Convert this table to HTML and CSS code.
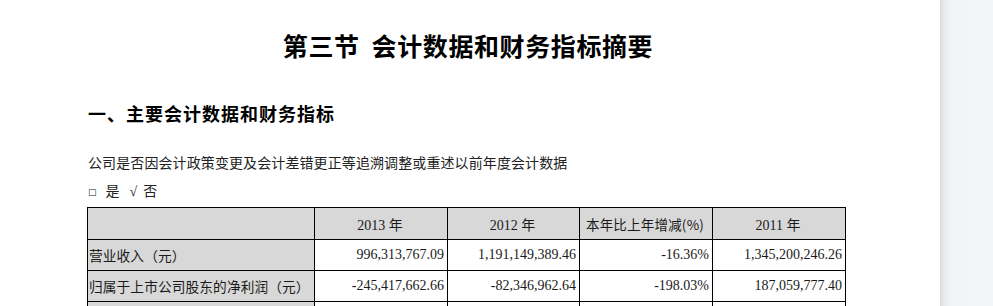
FILE: index.html
```html
<!DOCTYPE html>
<html lang="zh-CN">
<head>
<meta charset="utf-8">
<title>第三节 会计数据和财务指标摘要</title>
<link rel="stylesheet" href="styles.css">
</head>
<body>
<div class="viewer">
  <div class="page">
    <h1 class="title">第三节<span class="gap"> </span>会计数据和财务指标摘要</h1>
    <h2 class="section">一、主要会计数据和财务指标</h2>
    <p class="note">公司是否因会计政策变更及会计差错更正等追溯调整或重述以前年度会计数据</p>
    <p class="choice"><span class="box">□</span><span class="opt">是</span><span class="tick">√</span><span class="opt">否</span></p>
    <table class="data">
      <colgroup>
        <col class="c1"><col class="c2"><col class="c3"><col class="c4"><col class="c5">
      </colgroup>
      <tr class="head">
        <th></th>
        <th>2013 年</th>
        <th>2012 年</th>
        <th class="cjk">本年比上年增减(%)</th>
        <th>2011 年</th>
      </tr>
      <tr>
        <td class="label">营业收入（元）</td>
        <td class="num">996,313,767.09</td>
        <td class="num">1,191,149,389.46</td>
        <td class="num">-16.36%</td>
        <td class="num">1,345,200,246.26</td>
      </tr>
      <tr>
        <td class="label">归属于上市公司股东的净利润（元）</td>
        <td class="num">-245,417,662.66</td>
        <td class="num">-82,346,962.64</td>
        <td class="num">-198.03%</td>
        <td class="num">187,059,777.40</td>
      </tr>
      <tr class="tall">
        <td class="label"></td>
        <td class="num"></td>
        <td class="num"></td>
        <td class="num"></td>
        <td class="num"></td>
      </tr>
    </table>
  </div>
  <div class="side"></div>
</div>
</body>
</html>
```
FILE: styles.css
```css
html, body {
  margin: 0;
  padding: 0;
  height: 100%;
  overflow: hidden;
}
body {
  background: #f4f5f7;
  color: #111;
  font-family: "Liberation Serif", "Noto Sans CJK SC", serif;
}
.viewer {
  display: flex;
  height: 306px;
  overflow: hidden;
}
.page {
  width: 940px;
  flex: none;
  background: #ffffff;
  padding-left: 87px;
  box-sizing: border-box;
}
.side {
  flex: 1;
  background: linear-gradient(to right, #d9dadd 0px, #e9eaed 4px, #f3f4f6 11px, #f4f5f7 100%);
}
.title {
  margin: 31px 0 0 0;
  width: 762px;
  text-align: center;
  font-family: "Noto Sans CJK SC", sans-serif;
  font-weight: 700;
  font-size: 25px;
  line-height: 28px;
  color: #000;
  letter-spacing: 0.6px;
}
.title .gap {
  display: inline-block;
  width: 12px;
}
.section {
  margin: 42px 0 0 1px;
  font-family: "Noto Sans CJK SC", sans-serif;
  font-weight: 700;
  font-size: 18px;
  line-height: 24px;
  letter-spacing: 1px;
  color: #000;
}
.note {
  margin: 27px 0 0 1px;
  font-family: "Noto Sans CJK SC", sans-serif;
  font-size: 14px;
  line-height: 20px;
  letter-spacing: 0.1px;
  color: #222;
}
.choice {
  margin: 8px 0 0 1px;
  font-family: "Noto Sans CJK SC", sans-serif;
  font-size: 14px;
  line-height: 20px;
  color: #222;
}
.choice .box {
  font-family: "DejaVu Sans", sans-serif;
  font-size: 9px;
  vertical-align: 1px;
  margin-right: 9px;
}
.choice .tick {
  font-family: "Liberation Serif", serif;
  margin: 0 6px 0 10px;
}
.data {
  margin-top: 5px;
  border-collapse: collapse;
  table-layout: fixed;
  width: 758px;
  font-size: 14px;
  color: #1a1a1a;
}
.data col.c1 { width: 227px; }
.data col.c2 { width: 133px; }
.data col.c3 { width: 132px; }
.data col.c4 { width: 133px; }
.data col.c5 { width: 133px; }
.data th, .data td {
  border: 1px solid #000;
  height: 30px;
  padding: 0 3px 0 1px;
  white-space: nowrap;
  overflow: hidden;
  font-weight: 400;
}
.data tr.head th {
  background: #d8d8d8;
  text-align: center;
  height: 31px;
}
.data tr.tall td {
  height: 30px;
}
.data th.cjk {
  font-family: "Noto Sans CJK SC", sans-serif;
  font-size: 13.5px;
  letter-spacing: 0.2px;
}
.data td.label {
  background: #d8d8d8;
  text-align: left;
  font-family: "Noto Sans CJK SC", sans-serif;
  font-size: 13.7px;
  letter-spacing: 0.1px;
}
.data td.num {
  text-align: right;
}
```
